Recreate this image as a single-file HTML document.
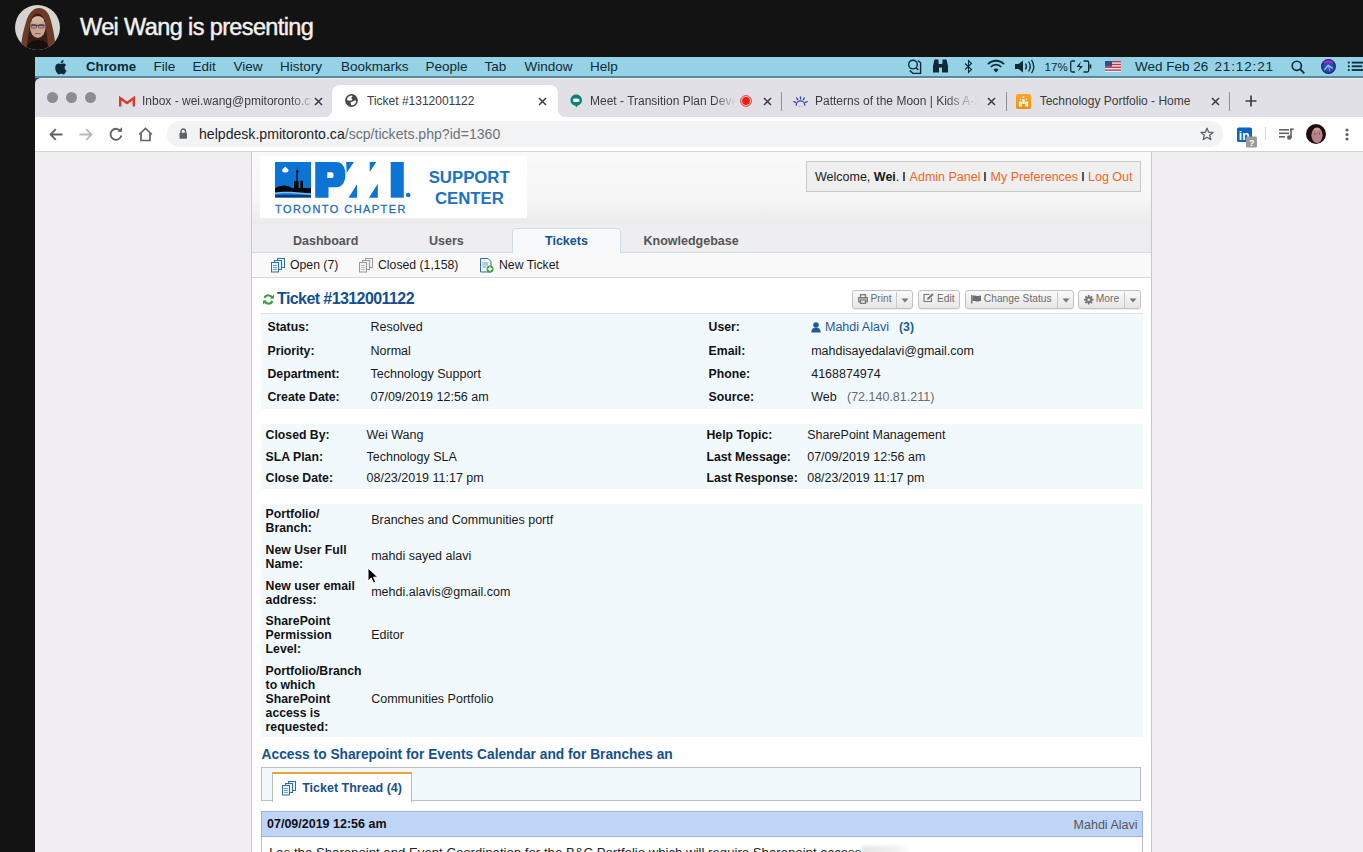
<!DOCTYPE html>
<html><head><meta charset="utf-8"><style>*{margin:0;padding:0;box-sizing:border-box}
html,body{width:1363px;height:852px;overflow:hidden;background:#131313;font-family:"Liberation Sans",sans-serif}
.a{position:absolute;white-space:nowrap}
svg.a{overflow:visible}
</style></head><body>
<svg class="a" style="left:15px;top:5px;" width="45" height="45" viewBox="0 0 45 45"><defs><clipPath id="av"><circle cx="22.5" cy="22.5" r="22.5"/></clipPath><filter id="bl" x="-10%" y="-10%" width="120%" height="120%"><feGaussianBlur stdDeviation="0.7"/></filter></defs>
<g clip-path="url(#av)"><rect width="45" height="45" fill="#d6d4d1"/>
<g filter="url(#bl)">
<path d="M6 45 C6 36 8 26 12 14 C15 6 20 3 24 3 C30 3 34 8 36 16 C39 27 40 36 41 45 Z" fill="#6a3b26"/>
<path d="M12 45 C12 38 13 30 14.5 22 C15.5 14 18 9 22 8.5 C27 8.5 30 13 31 22 C32 30 33 38 33 45 Z" fill="#3a1e14"/>
<ellipse cx="22.8" cy="22" rx="7.8" ry="11" fill="#c9a391"/>
<ellipse cx="22.8" cy="15" rx="6" ry="3.5" fill="#d4b3a2"/>
<path d="M16 20.5 H29.5" stroke="#52464d" stroke-width="1.3"/>
<rect x="16" y="19.5" width="5.5" height="3.5" rx="1" fill="none" stroke="#52464d" stroke-width="0.8"/>
<rect x="23.5" y="19.5" width="5.5" height="3.5" rx="1" fill="none" stroke="#52464d" stroke-width="0.8"/>
<path d="M20 28.5 H25.5" stroke="#8a5a50" stroke-width="1"/>
<path d="M10 45 C12 38 17 35 23 35 C29 35 33 38 35 45 Z" fill="#141111"/>
</g></g></svg>
<div class="a" style="left:80px;top:15.63px;font-size:23.5px;line-height:23.5px;color:#f1f1f1;letter-spacing:-0.62px;-webkit-text-stroke:0.45px #f1f1f1;">Wei Wang is presenting</div>
<div class="a" style="left:35px;top:57px;width:1328px;height:20px;background:#95d2e5"></div>
<div class="a" style="left:35px;top:76px;width:1328px;height:2px;background:#5b8994"></div>
<div class="a" style="left:35px;top:78px;width:7px;height:7px;background:#1d4f5d"></div>
<svg class="a" style="left:55px;top:60px;" width="12" height="14" viewBox="0 0 12 14"><path d="M9.6 7.5c0-1.7 1.4-2.5 1.5-2.6-.8-1.2-2.1-1.4-2.5-1.4-1.1-.1-2.1.6-2.6.6s-1.4-.6-2.3-.6C2.5 3.5 1.4 4.2.8 5.3-.5 7.5.5 10.8 1.7 12.6c.6.9 1.3 1.8 2.2 1.8.9 0 1.2-.6 2.3-.6s1.4.6 2.3.6c.9 0 1.5-.9 2.1-1.8.7-1 .9-1.9 1-2-.1 0-2-.8-2-3.1zM7.9 2.3c.5-.6.8-1.4.7-2.3-.7 0-1.6.5-2.1 1.1-.5.5-.9 1.4-.8 2.2.8.1 1.7-.4 2.2-1z" fill="#0d2a38"/></svg>
<div class="a" style="left:86px;top:59.74px;font-size:13.25px;line-height:13.25px;font-weight:bold;color:#0d2a38;">Chrome</div>
<div class="a" style="left:153.5px;top:59.52px;font-size:13.5px;line-height:13.5px;color:#0d2a38;">File</div>
<div class="a" style="left:192.5px;top:59.52px;font-size:13.5px;line-height:13.5px;color:#0d2a38;">Edit</div>
<div class="a" style="left:233.5px;top:59.52px;font-size:13.5px;line-height:13.5px;color:#0d2a38;">View</div>
<div class="a" style="left:280px;top:59.52px;font-size:13.5px;line-height:13.5px;color:#0d2a38;">History</div>
<div class="a" style="left:341px;top:59.52px;font-size:13.5px;line-height:13.5px;color:#0d2a38;">Bookmarks</div>
<div class="a" style="left:425.5px;top:59.52px;font-size:13.5px;line-height:13.5px;color:#0d2a38;">People</div>
<div class="a" style="left:484.5px;top:59.52px;font-size:13.5px;line-height:13.5px;color:#0d2a38;">Tab</div>
<div class="a" style="left:524.5px;top:59.52px;font-size:13.5px;line-height:13.5px;color:#0d2a38;">Window</div>
<div class="a" style="left:590px;top:59.52px;font-size:13.5px;line-height:13.5px;color:#0d2a38;">Help</div>
<svg class="a" style="left:907px;top:59px;" width="16" height="16" viewBox="0 0 16 16"><g fill="none" stroke="#0d2a38" stroke-width="1.4"><circle cx="6" cy="5.6" r="4.3"/><path d="M9.1 8.7 L11.4 11"/><path d="M10.8 1.5 L13.6 3.8 V14.4 H6 L2.8 11.6"/></g></svg>
<svg class="a" style="left:933px;top:59px;" width="15" height="14" viewBox="0 0 15 14"><g fill="#0d2a38"><path d="M1.5 0.5 H5.5 V4 L6 5 V13.5 H0 V7 Z"/><path d="M13.5 0.5 H9.5 V4 L9 5 V13.5 H15 V7 Z"/><rect x="5.5" y="5" width="4" height="3.5"/></g></svg>
<svg class="a" style="left:964px;top:59px;" width="9" height="15" viewBox="0 0 9 15"><path d="M1 4.5 L7.5 10.5 L4.5 13.5 V1.5 L7.5 4.5 L1 10.5" fill="none" stroke="#0d2a38" stroke-width="1.1"/></svg>
<svg class="a" style="left:987px;top:59px;" width="18" height="14" viewBox="0 0 18 14"><path d="M1 5.2 A11 11 0 0 1 17 5.2" fill="none" stroke="#0d2a38" stroke-width="1.8"/><path d="M3.8 8 A7 7 0 0 1 14.2 8" fill="none" stroke="#0d2a38" stroke-width="1.8"/><path d="M6.5 10.8 A3.2 3.2 0 0 1 11.5 10.8 L9 13.5 Z" fill="#0d2a38"/></svg>
<svg class="a" style="left:1014px;top:59px;" width="21" height="15" viewBox="0 0 21 15"><path d="M1 5 H4.5 L9 1.5 V13.5 L4.5 10 H1 Z" fill="#0d2a38"/><path d="M11.5 4.5 Q13.5 7.5 11.5 10.5" fill="none" stroke="#0d2a38" stroke-width="1.3"/><path d="M14.5 2.5 Q18 7.5 14.5 12.5" fill="none" stroke="#0d2a38" stroke-width="1.3"/><path d="M17.5 0.8 Q22 7.5 17.5 14.2" fill="none" stroke="#0d2a38" stroke-width="1.3"/></svg>
<div class="a" style="left:1044.5px;top:61.14px;font-size:11.6px;line-height:11.6px;color:#0d2a38;">17%</div>
<svg class="a" style="left:1070px;top:60px;" width="22" height="13" viewBox="0 0 22 13"><path d="M5 1 H2.2 Q0.7 1 0.7 2.5 V10.5 Q0.7 12 2.2 12 H5 M13.5 1 H17.2 Q18.7 1 18.7 2.5 V10.5 Q18.7 12 17.2 12 H13.5" fill="none" stroke="#0d2a38" stroke-width="1.3"/><rect x="19.5" y="4.5" width="1.8" height="4" fill="#0d2a38"/><path d="M11 1.5 L6.5 7 H10 L8 11.5 L13 6 H9.5 Z" fill="#0d2a38"/></svg>
<svg class="a" style="left:1105px;top:61px;" width="16" height="11" viewBox="0 0 16 11"><rect width="16" height="11" fill="#e8e8f0"/><rect y="0" width="16" height="1.4" fill="#c7394a"/><rect y="2.8" width="16" height="1.4" fill="#c7394a"/><rect y="5.6" width="16" height="1.4" fill="#c7394a"/><rect y="8.4" width="16" height="1.4" fill="#c7394a"/><rect width="7" height="5.6" fill="#3c4a8c"/></svg>
<div class="a" style="left:1135px;top:59.52px;font-size:13.5px;line-height:13.5px;color:#0d2a38;">Wed Feb 26</div>
<div class="a" style="left:1214.5px;top:59.52px;font-size:13.5px;line-height:13.5px;color:#0d2a38;letter-spacing:0.85px;">21:12:21</div>
<svg class="a" style="left:1291px;top:60px;" width="14" height="14" viewBox="0 0 14 14"><circle cx="5.8" cy="5.8" r="4.6" fill="none" stroke="#0d2a38" stroke-width="1.6"/><path d="M9.2 9.2 L13.3 13.3" stroke="#0d2a38" stroke-width="1.8"/></svg>
<svg class="a" style="left:1321px;top:58.8px;" width="15" height="15" viewBox="0 0 15 15"><defs><radialGradient id="siri" cx="50%" cy="50%" r="50%"><stop offset="0" stop-color="#3a5fd8"/><stop offset="0.75" stop-color="#2a3fa8"/><stop offset="1" stop-color="#101a50"/></radialGradient></defs><circle cx="7.5" cy="7.5" r="7.4" fill="url(#siri)"/><path d="M3 4 Q7.5 0.5 12 4" stroke="#c02cc8" stroke-width="2" fill="none" opacity="0.85"/><path d="M3.2 11 L7.2 6.3 L11.8 9.5" stroke="#6fe0f5" stroke-width="1.2" fill="none"/><path d="M7.2 6.3 L9 12.5" stroke="#c58ae8" stroke-width="0.9" fill="none"/></svg>
<svg class="a" style="left:1346.5px;top:61px;" width="17" height="12" viewBox="0 0 17 12"><g fill="#0d2a38"><circle cx="1.8" cy="1.6" r="1.1"/><circle cx="1.8" cy="5.3" r="1.1"/><circle cx="1.8" cy="9" r="1.1"/><rect x="4.7" y="0.7" width="13" height="1.8"/><rect x="4.7" y="4.4" width="10.5" height="1.8"/><rect x="4.7" y="8.1" width="13" height="1.8"/></g></svg>
<div class="a" style="left:35px;top:78px;width:1328px;height:39px;background:#e0e0e6;border-top:1px solid #e6eef4;border-top-left-radius:6px"></div>
<div class="a" style="left:47.099999999999994px;top:92px;width:11.4px;height:11.4px;background:#8d8d91;border-radius:50%"></div>
<div class="a" style="left:65.8px;top:92px;width:11.4px;height:11.4px;background:#8d8d91;border-radius:50%"></div>
<div class="a" style="left:84.6px;top:92px;width:11.4px;height:11.4px;background:#8d8d91;border-radius:50%"></div>
<svg class="a" style="left:119px;top:96px;" width="16" height="11" viewBox="0 0 16 11"><path d="M1.2 10.5 V2 L8 7 L14.8 2 V10.5" fill="none" stroke="#d93a2b" stroke-width="2.4" stroke-linejoin="miter"/></svg>
<div class="a" style="left:142px;top:94.80px;font-size:12px;line-height:12px;color:#3b3c40;width:174px;overflow:hidden;padding-bottom:4px;-webkit-mask-image:linear-gradient(90deg,#000 85%,transparent);">Inbox - wei.wang@pmitoronto.c</div>
<svg class="a" style="left:313.5px;top:96.5px;" width="9" height="9" viewBox="0 0 9 9"><path d="M1 1 L8 8 M8 1 L1 8" stroke="#3b3c40" stroke-width="1.5"/></svg>
<div class="a" style="left:331.5px;top:85px;width:226px;height:32px;background:#fff;border-radius:8px 8px 0 0"></div>
<div class="a" style="left:323.5px;top:109px;width:8px;height:8px;background:radial-gradient(circle at 0 0,#e0e0e6 8px,#fff 8.5px)"></div>
<div class="a" style="left:557.5px;top:109px;width:8px;height:8px;background:radial-gradient(circle at 100% 0,#e0e0e6 8px,#fff 8.5px)"></div>
<svg class="a" style="left:344.5px;top:94.3px;" width="13" height="13" viewBox="0 0 13 13"><circle cx="6.5" cy="6.5" r="6.4" fill="#48494c"/><path d="M2 6 C2 3.8 3.8 2 6.2 1.6 L7.6 2.2 C6.4 3 6 4 6.9 4.8 C7.6 5.4 7.2 6.4 6.2 6.6 C4.6 6.8 3.2 6.6 2 6 Z" fill="#fff"/><path d="M5.4 8.8 C6.4 7.8 7.6 7.9 8.6 7.1 C9.6 6.5 10.6 6.4 11.2 6.9 C11 9.4 9.2 11.2 7 11.3 L5.8 10.9 C6.4 10.2 6.1 9.3 5.4 8.8 Z" fill="#fff"/></svg>
<div class="a" style="left:367px;top:94.80px;font-size:12px;line-height:12px;color:#3b3c40;">Ticket #1312001122</div>
<svg class="a" style="left:538.0px;top:96.5px;" width="9" height="9" viewBox="0 0 9 9"><path d="M1 1 L8 8 M8 1 L1 8" stroke="#3b3c40" stroke-width="1.5"/></svg>
<svg class="a" style="left:569.5px;top:93.5px;" width="12.5" height="14" viewBox="0 0 12.5 14"><path d="M6.25 0.6 C9.5 0.6 12 3.1 12 6.2 C12 9 10 11.2 7.4 11.7 L6.2 13.6 L5.6 11.7 C2.7 11.3 0.5 9 0.5 6.2 C0.5 3.1 3 0.6 6.25 0.6 Z" fill="#0b8175"/><rect x="3.3" y="4.6" width="4.6" height="3.5" rx="0.5" fill="#f2fbfa"/><path d="M7.6 5.6 L9.3 4.5 V8.2 L7.6 7.1 Z" fill="#f2fbfa"/></svg>
<div class="a" style="left:590px;top:94.80px;font-size:12px;line-height:12px;color:#3b3c40;width:146px;overflow:hidden;padding-bottom:4px;-webkit-mask-image:linear-gradient(90deg,#000 85%,transparent);">Meet - Transition Plan Development</div>
<svg class="a" style="left:740px;top:95px;" width="12" height="12" viewBox="0 0 12 12"><circle cx="6" cy="6" r="5.4" fill="none" stroke="#f0281c" stroke-width="0.9"/><circle cx="6" cy="6" r="3.9" fill="#f41c0e"/></svg>
<svg class="a" style="left:762.5px;top:96.5px;" width="9" height="9" viewBox="0 0 9 9"><path d="M1 1 L8 8 M8 1 L1 8" stroke="#3b3c40" stroke-width="1.5"/></svg>
<div class="a" style="left:781px;top:92px;width:1.2px;height:19px;background:#8f9196"></div>
<svg class="a" style="left:792.5px;top:95.5px;" width="15" height="11" viewBox="0 0 15 11"><g stroke="#4246a8" stroke-width="1.3" fill="none" stroke-linecap="round"><path d="M3.2 9.2 A4.3 4.3 0 0 1 11.8 9.2"/><path d="M7.5 0.8 V3"/><path d="M3.6 1.9 L4.7 3.7"/><path d="M11.4 1.9 L10.3 3.7"/><path d="M0.8 5.6 L2.6 6.4"/><path d="M14.2 5.6 L12.4 6.4"/></g><circle cx="6.3" cy="10.4" r="0.5" fill="#8a8cc8"/><circle cx="8.7" cy="10.4" r="0.5" fill="#8a8cc8"/></svg>
<div class="a" style="left:815px;top:94.80px;font-size:12px;line-height:12px;color:#3b3c40;width:166px;overflow:hidden;padding-bottom:4px;-webkit-mask-image:linear-gradient(90deg,#000 78%,transparent 98%);">Patterns of the Moon | Kids A-Z</div>
<svg class="a" style="left:986.5px;top:96.5px;" width="9" height="9" viewBox="0 0 9 9"><path d="M1 1 L8 8 M8 1 L1 8" stroke="#3b3c40" stroke-width="1.5"/></svg>
<div class="a" style="left:1005.5px;top:92px;width:1.2px;height:19px;background:#8f9196"></div>
<svg class="a" style="left:1016px;top:93.5px;" width="15" height="15" viewBox="0 0 15 15"><defs><linearGradient id="yg" x1="0" y1="0" x2="0" y2="1"><stop offset="0" stop-color="#f9a825"/><stop offset="1" stop-color="#f78a0c"/></linearGradient></defs><rect width="15" height="15" rx="2" fill="url(#yg)"/><g fill="#fffbe8"><rect x="2.8" y="7.5" width="3" height="5"/><rect x="9.2" y="7.5" width="3" height="5"/><rect x="6.3" y="5" width="2.4" height="5"/><circle cx="7.5" cy="3" r="0.9"/><circle cx="4.4" cy="5.3" r="0.8"/><circle cx="10.6" cy="5.3" r="0.8"/></g></svg>
<div class="a" style="left:1039.7px;top:94.80px;font-size:12px;line-height:12px;color:#3b3c40;">Technology Portfolio - Home</div>
<svg class="a" style="left:1211.0px;top:96.5px;" width="9" height="9" viewBox="0 0 9 9"><path d="M1 1 L8 8 M8 1 L1 8" stroke="#3b3c40" stroke-width="1.5"/></svg>
<div class="a" style="left:1229px;top:92px;width:1.2px;height:19px;background:#8f9196"></div>
<svg class="a" style="left:1244.5px;top:95px;" width="12" height="12" viewBox="0 0 12 12"><path d="M6 0.5 V11.5 M0.5 6 H11.5" stroke="#3b3c40" stroke-width="1.7"/></svg>
<div class="a" style="left:35px;top:117px;width:1328px;height:34px;background:#fff"></div>
<div class="a" style="left:35px;top:151px;width:1328px;height:1px;background:#d3d3d6"></div>
<svg class="a" style="left:48.5px;top:127.5px;" width="14" height="13" viewBox="0 0 14 13"><path d="M13.5 6.5 H1.5 M6.8 1.2 L1.5 6.5 L6.8 11.8" fill="none" stroke="#5f6368" stroke-width="1.8"/></svg>
<svg class="a" style="left:78.5px;top:127.5px;" width="14" height="13" viewBox="0 0 14 13"><path d="M0.5 6.5 H12.5 M7.2 1.2 L12.5 6.5 L7.2 11.8" fill="none" stroke="#b8babd" stroke-width="1.8"/></svg>
<svg class="a" style="left:108.5px;top:127px;" width="14" height="14" viewBox="0 0 14 14"><path d="M11.6 4.2 A5.5 5.5 0 1 0 12.4 8.5" fill="none" stroke="#5f6368" stroke-width="1.8"/><path d="M8.3 4.8 H13 V0.2 Z" fill="#5f6368"/></svg>
<svg class="a" style="left:138px;top:126.5px;" width="15" height="14.5" viewBox="0 0 15 14.5"><path d="M1.2 7.5 L7.5 1.5 L13.8 7.5 M3 6 V13.5 H12 V6" fill="none" stroke="#5f6368" stroke-width="1.7" stroke-linejoin="miter"/></svg>
<div class="a" style="left:167px;top:121px;width:1056px;height:25.5px;background:#f1f3f4;border-radius:13px"></div>
<svg class="a" style="left:179px;top:128px;" width="8.5" height="11" viewBox="0 0 8.5 11"><path d="M2 5 V3.3 A2.25 2.25 0 0 1 6.5 3.3 V5" fill="none" stroke="#5f6368" stroke-width="1.4"/><rect x="0.5" y="4.8" width="7.5" height="6" rx="0.8" fill="#5f6368"/></svg>
<div class="a" style="left:199px;top:127.02px;font-size:14.1px;line-height:14.1px;color:#222;">helpdesk.pmitoronto.ca<span style="color:#6f7276">/scp/tickets.php?id=1360</span></div>
<svg class="a" style="left:1199.5px;top:127px;" width="14" height="14" viewBox="0 0 14 14"><path d="M7 1.2 L8.7 5.2 L13 5.5 L9.7 8.3 L10.8 12.6 L7 10.3 L3.2 12.6 L4.3 8.3 L1 5.5 L5.3 5.2 Z" fill="none" stroke="#5f6368" stroke-width="1.3" stroke-linejoin="round"/></svg>
<svg class="a" style="left:1237px;top:126.5px;" width="21" height="21" viewBox="0 0 21 21"><rect x="0" y="0.5" width="15" height="14.5" rx="1.5" fill="#0a66c2"/><text x="1.8" y="12.6" font-family="Liberation Sans" font-weight="bold" font-size="12" fill="#fff">in</text><rect x="9" y="9.5" width="11" height="11" rx="1.5" fill="#9a9a9a"/><text x="12" y="18.5" font-family="Liberation Sans" font-weight="bold" font-size="9" fill="#fff">?</text></svg>
<div class="a" style="left:1265px;top:127px;width:1px;height:13px;background:#d6d6d8"></div>
<svg class="a" style="left:1279px;top:128px;" width="15" height="12" viewBox="0 0 15 12"><g fill="#5f6368"><rect x="0" y="1" width="10" height="1.6"/><rect x="0" y="4.5" width="10" height="1.6"/><rect x="0" y="8" width="6" height="1.6"/><circle cx="10.3" cy="9.5" r="2.3"/><rect x="11.2" y="0.5" width="1.6" height="9"/><rect x="11.2" y="0.5" width="3.5" height="1.6"/></g></svg>
<svg class="a" style="left:1306px;top:123.8px;" width="20" height="20" viewBox="0 0 20 20"><defs><clipPath id="av2"><circle cx="10" cy="10" r="10"/></clipPath></defs><g clip-path="url(#av2)"><rect width="20" height="20" fill="#1e0d0e"/><ellipse cx="11" cy="11.2" rx="5.6" ry="7.8" fill="#b5818a"/><ellipse cx="11" cy="5.2" rx="3" ry="1.5" fill="#cf9a98"/><circle cx="8.8" cy="10" r="0.7" fill="#6a3a44"/><circle cx="13.5" cy="9.5" r="0.7" fill="#6a3a44"/></g></svg>
<svg class="a" style="left:1345px;top:128px;" width="4" height="13" viewBox="0 0 4 13"><g fill="#5f6368"><circle cx="2" cy="2" r="1.6"/><circle cx="2" cy="6.5" r="1.6"/><circle cx="2" cy="11" r="1.6"/></g></svg>
<div class="a" style="left:35px;top:152px;width:1328px;height:700px;background:#f0eef1"></div>
<div class="a" style="left:251px;top:152px;width:901px;height:700px;background:#fff;border-left:1px solid #c9c9cb;border-right:1px solid #c9c9cb"></div>
<div class="a" style="left:252px;top:152px;width:899px;height:72px;background:linear-gradient(#f9f9f9 0,#f7f7f7 62%,#ebebeb 100%)"></div>
<div class="a" style="left:260px;top:156px;width:267px;height:62px;background:#fff"></div>
<svg class="a" style="left:275px;top:162px;" width="36" height="35.5" viewBox="0 0 36 35.5"><rect width="36" height="35.5" fill="#0b74d4"/>
<path d="M0 26.5 C3 24 7 23.3 10 23.5 C13 23.8 15.5 25 17 26 H19 V19 H21.4 V12 L21.8 9 L22.1 3.6 L22.4 9 L22.8 12 V19 H23.6 V26 H25.3 V18.7 H28 V26 H36 V31 H0 Z" fill="#050a12"/>
<circle cx="22.3" cy="9.5" r="1.3" fill="#050a12"/>
<path d="M0 30.5 C8 29 18 29.5 36 31.5 V33 C18 31 8 30.7 0 32 Z" fill="#7cc3f2"/>
<path d="M0 33 H36 V35.5 H0 Z" fill="#0a3a78"/>
<path d="M10.3 4.6 C11 5.5 11.3 6 12 6 C12.5 6.3 12.2 7 12.8 7.2 C13.8 7.5 13.8 8.5 13.2 9.3 C12.5 10.3 11.3 10.6 10.3 10.6 C9.3 10.6 8 10.3 7.4 9.3 C6.8 8.5 6.8 7.5 7.8 7.2 C8.4 7 8.1 6.3 8.6 6 C9.3 6 9.6 5.5 10.3 4.6 Z" fill="#fff"/>
</svg>
<svg class="a" style="left:315px;top:162px;" width="95" height="36" viewBox="0 0 95 36"><g fill="#0b74d4">
<path d="M0.2 0 H21 C27 0 30.4 4.5 30.4 12.5 C30.4 20.5 27 25.3 21 25.3 H13.5 V35.7 H0.2 Z M12.3 10.2 V16 H17 C18.3 16 18.5 14.5 18.5 13 C18.5 11.3 18 10.2 16.7 10.2 Z" fill-rule="evenodd"/>
<path d="M31.2 0 H38.9 L31.6 11 Z"/>
<path d="M33.5 35.7 H42 V22.2 Z"/>
<path d="M54.7 0 H61.3 L54.7 9.9 Z"/>
<path d="M53.9 35.7 H62.8 V21.8 Z"/>
<path d="M75.7 0 H88.8 V35.7 H75.7 Z"/>
<circle cx="93.2" cy="33" r="2.3"/>
</g></svg>
<div class="a" style="left:275px;top:203.85px;font-size:11px;line-height:11px;color:#1c6fb8;letter-spacing:1.45px;-webkit-text-stroke:0.3px #1c6fb8;">TORONTO CHAPTER</div>
<div class="a" style="left:428.7px;top:169.76px;font-size:16.75px;line-height:16.75px;font-weight:bold;color:#1a72c4;">SUPPORT</div>
<div class="a" style="left:435px;top:190.76px;font-size:16.75px;line-height:16.75px;font-weight:bold;color:#1a72c4;">CENTER</div>
<div class="a" style="left:806px;top:161px;width:335px;height:31px;background:#efefef;border:1px solid #c8c8c8"></div>
<div class="a" style="left:815px;top:170.97px;font-size:12.5px;line-height:12.5px;color:#1a1a1a;">Welcome, <b>Wei</b>.</div>
<div class="a" style="left:903.3px;top:172.2px;width:1.6px;height:8.8px;background:#555"></div>
<div class="a" style="left:909.6px;top:170.97px;font-size:12.5px;line-height:12.5px;color:#ef671d;">Admin Panel</div>
<div class="a" style="left:984.3px;top:172.2px;width:1.6px;height:8.8px;background:#555"></div>
<div class="a" style="left:990.5px;top:170.97px;font-size:12.5px;line-height:12.5px;color:#ef671d;">My Preferences</div>
<div class="a" style="left:1082.3px;top:172.2px;width:1.6px;height:8.8px;background:#555"></div>
<div class="a" style="left:1088px;top:170.97px;font-size:12.5px;line-height:12.5px;color:#ef671d;">Log Out</div>
<div class="a" style="left:252px;top:224px;width:899px;height:29px;background:#eeedef;border-bottom:1px solid #cfdce8"></div>
<div class="a" style="left:512px;top:228px;width:109px;height:25px;background:#f7f9fb;border:1px solid #cfdbe6;border-bottom:none;border-radius:4px 4px 0 0"></div>
<div class="a" style="left:293px;top:234.82px;font-size:12.5px;line-height:12.5px;font-weight:bold;color:#555;">Dashboard</div>
<div class="a" style="left:429px;top:234.82px;font-size:12.5px;line-height:12.5px;font-weight:bold;color:#555;">Users</div>
<div class="a" style="left:545px;top:234.82px;font-size:12.5px;line-height:12.5px;font-weight:bold;color:#15518f;">Tickets</div>
<div class="a" style="left:643.5px;top:234.82px;font-size:12.5px;line-height:12.5px;font-weight:bold;color:#555;">Knowledgebase</div>
<div class="a" style="left:252px;top:253px;width:899px;height:25px;background:#f9f9f9;border-bottom:1px solid #d8d8d8"></div>
<svg class="a" style="left:270px;top:258px;" width="16" height="15" viewBox="0 0 16 15"><g stroke="#2f6fa6" stroke-width="1" fill="#e9f1f8"><rect x="7.5" y="0.5" width="7" height="9"/><rect x="4.5" y="2.5" width="7" height="9"/><rect x="1.5" y="4.5" width="7" height="9.5"/></g><g stroke="#2f6fa6" stroke-width="0.6"><path d="M3 7.5 H7 M3 9.5 H7 M3 11.5 H7"/></g></svg>
<div class="a" style="left:290px;top:259.14px;font-size:12.25px;line-height:12.25px;color:#1a1a1a;">Open (7)</div>
<svg class="a" style="left:358px;top:258px;" width="16" height="15" viewBox="0 0 16 15"><g stroke="#9a9a9a" stroke-width="1" fill="#f2f2f2"><rect x="7.5" y="0.5" width="7" height="9"/><rect x="4.5" y="2.5" width="7" height="9"/><rect x="1.5" y="4.5" width="7" height="9.5"/></g><g stroke="#9a9a9a" stroke-width="0.6"><path d="M3 7.5 H7 M3 9.5 H7 M3 11.5 H7"/></g></svg>
<div class="a" style="left:378px;top:259.14px;font-size:12.25px;line-height:12.25px;color:#1a1a1a;">Closed (1,158)</div>
<svg class="a" style="left:480px;top:257.5px;" width="14" height="15" viewBox="0 0 14 15"><path d="M0.5 0.5 H8 L11 3.5 V14 H0.5 Z" fill="#eef3f8" stroke="#2f6fa6" stroke-width="1"/><path d="M2.5 5 H8 M2.5 7 H8 M2.5 9 H6" stroke="#2f6fa6" stroke-width="0.6"/><circle cx="10" cy="11" r="3.5" fill="#3aa03a"/><path d="M10 8.8 V13.2 M7.8 11 H12.2" stroke="#fff" stroke-width="1.3"/></svg>
<div class="a" style="left:499px;top:259.14px;font-size:12.25px;line-height:12.25px;color:#1a1a1a;">New Ticket</div>
<svg class="a" style="left:262.5px;top:293.5px;" width="11" height="11" viewBox="0 0 11 11"><g fill="none" stroke="#3a9d3a" stroke-width="2"><path d="M9.5 4.2 A4.3 4.3 0 0 0 1.5 4"/><path d="M1.5 6.8 A4.3 4.3 0 0 0 9.5 7"/></g><path d="M7 4.5 H11 V0.5 Z" fill="#3a9d3a"/><path d="M4 6.5 H0 V10.5 Z" fill="#3a9d3a"/></svg>
<div class="a" style="left:277px;top:291.40px;font-size:16px;line-height:16px;font-weight:bold;color:#13508f;letter-spacing:-0.58px;">Ticket #1312001122</div>
<div class="a" style="left:852px;top:290px;width:61px;height:18.5px;background:linear-gradient(#fafafa,#e6e6e6);border:1px solid #c2c2c2;border-radius:3px;box-shadow:0 1px 0 rgba(0,0,0,0.06)"></div>
<div class="a" style="left:896.4px;top:291.5px;width:1px;height:16px;background:#c8c8c8"></div>
<svg class="a" style="left:857.5px;top:293.5px;" width="10" height="10" viewBox="0 0 10 10"><g fill="none" stroke="#777" stroke-width="1.3"><rect x="2.5" y="0.7" width="5" height="3"/><rect x="0.7" y="3.7" width="8.6" height="4"/><rect x="2.5" y="6" width="5" height="3.3" fill="#f4f4f4"/></g></svg>
<div class="a" style="left:870.5px;top:294.49px;font-size:10.25px;line-height:10.25px;color:#6e6e6e;">Print</div>
<svg class="a" style="left:900.5px;top:297.5px;" width="8" height="5" viewBox="0 0 8 5"><path d="M0.5 0.5 H7.5 L4 4.5 Z" fill="#777"/></svg>
<div class="a" style="left:918.3px;top:290px;width:42px;height:18.5px;background:linear-gradient(#fafafa,#e6e6e6);border:1px solid #c2c2c2;border-radius:3px;box-shadow:0 1px 0 rgba(0,0,0,0.06)"></div>
<svg class="a" style="left:923px;top:293px;" width="11" height="10" viewBox="0 0 11 10"><path d="M6.5 1.5 H1 V8.5 H8.5 V5" fill="none" stroke="#777" stroke-width="1.1"/><path d="M4 6.8 L4.4 5 L9.3 0.3 L10.7 1.7 L5.8 6.4 Z" fill="#777"/></svg>
<div class="a" style="left:937px;top:294.49px;font-size:10.25px;line-height:10.25px;color:#6e6e6e;">Edit</div>
<div class="a" style="left:965px;top:290px;width:109px;height:18.5px;background:linear-gradient(#fafafa,#e6e6e6);border:1px solid #c2c2c2;border-radius:3px;box-shadow:0 1px 0 rgba(0,0,0,0.06)"></div>
<div class="a" style="left:1057.4px;top:291.5px;width:1px;height:16px;background:#c8c8c8"></div>
<svg class="a" style="left:971px;top:294.5px;" width="10.5" height="9" viewBox="0 0 10.5 9"><path d="M0.8 0 V8.5" stroke="#6e6e6e" stroke-width="1.3"/><path d="M1.5 0.8 C4 -0.2 5.5 1.8 10 0.6 V6 C5.5 7.2 4 5.2 1.5 6.2 Z" fill="#6e6e6e"/></svg>
<div class="a" style="left:983.8px;top:294.49px;font-size:10.25px;line-height:10.25px;color:#6e6e6e;">Change Status</div>
<svg class="a" style="left:1061.5px;top:297.5px;" width="8" height="5" viewBox="0 0 8 5"><path d="M0.5 0.5 H7.5 L4 4.5 Z" fill="#777"/></svg>
<div class="a" style="left:1078px;top:290px;width:63px;height:18.5px;background:linear-gradient(#fafafa,#e6e6e6);border:1px solid #c2c2c2;border-radius:3px;box-shadow:0 1px 0 rgba(0,0,0,0.06)"></div>
<div class="a" style="left:1124.4px;top:291.5px;width:1px;height:16px;background:#c8c8c8"></div>
<svg class="a" style="left:1084px;top:294.5px;" width="9.5" height="9.5" viewBox="0 0 9.5 9.5"><g fill="#777"><circle cx="4.75" cy="4.75" r="3.2"/><g stroke="#777" stroke-width="1.8"><path d="M4.75 0 V9.5 M0 4.75 H9.5 M1.4 1.4 L8.1 8.1 M8.1 1.4 L1.4 8.1"/></g></g><circle cx="4.75" cy="4.75" r="1.3" fill="#ececec"/></svg>
<div class="a" style="left:1095.8px;top:294.49px;font-size:10.25px;line-height:10.25px;color:#6e6e6e;">More</div>
<svg class="a" style="left:1128.5px;top:297.5px;" width="8" height="5" viewBox="0 0 8 5"><path d="M0.5 0.5 H7.5 L4 4.5 Z" fill="#777"/></svg>
<div class="a" style="left:261px;top:313px;width:882px;height:1px;background:#dedede"></div>
<div class="a" style="left:261px;top:314px;width:882px;height:95px;background:#f2f9fd"></div>
<div class="a" style="left:267.5px;top:321.14px;font-size:12.25px;line-height:12.25px;font-weight:bold;color:#111;">Status:</div>
<div class="a" style="left:370.5px;top:320.93px;font-size:12.5px;line-height:12.5px;color:#1a1a1a;">Resolved</div>
<div class="a" style="left:267.5px;top:344.94px;font-size:12.25px;line-height:12.25px;font-weight:bold;color:#111;">Priority:</div>
<div class="a" style="left:370.5px;top:344.73px;font-size:12.5px;line-height:12.5px;color:#1a1a1a;">Normal</div>
<div class="a" style="left:267.5px;top:368.24px;font-size:12.25px;line-height:12.25px;font-weight:bold;color:#111;">Department:</div>
<div class="a" style="left:370.5px;top:368.02px;font-size:12.5px;line-height:12.5px;color:#1a1a1a;">Technology Support</div>
<div class="a" style="left:267.5px;top:391.34px;font-size:12.25px;line-height:12.25px;font-weight:bold;color:#111;">Create Date:</div>
<div class="a" style="left:370.5px;top:391.12px;font-size:12.5px;line-height:12.5px;color:#1a1a1a;">07/09/2019 12:56 am</div>
<div class="a" style="left:708.6px;top:321.14px;font-size:12.25px;line-height:12.25px;font-weight:bold;color:#111;">User:</div>
<div class="a" style="left:708.6px;top:344.94px;font-size:12.25px;line-height:12.25px;font-weight:bold;color:#111;">Email:</div>
<div class="a" style="left:708.6px;top:368.24px;font-size:12.25px;line-height:12.25px;font-weight:bold;color:#111;">Phone:</div>
<div class="a" style="left:708.6px;top:391.34px;font-size:12.25px;line-height:12.25px;font-weight:bold;color:#111;">Source:</div>
<svg class="a" style="left:811px;top:321.5px;" width="10" height="11" viewBox="0 0 10 11"><circle cx="5" cy="3" r="2.8" fill="#1d5c96"/><path d="M0.3 10.5 C0.3 7 2 5.8 5 5.8 C8 5.8 9.7 7 9.7 10.5 Z" fill="#1d5c96"/></svg>
<div class="a" style="left:825px;top:320.93px;font-size:12.5px;line-height:12.5px;color:#1d5c96;">Mahdi Alavi</div>
<div class="a" style="left:899px;top:321.14px;font-size:12.25px;line-height:12.25px;font-weight:bold;color:#1d5c96;">(3)</div>
<div class="a" style="left:811.2px;top:344.73px;font-size:12.5px;line-height:12.5px;color:#1a1a1a;">mahdisayedalavi@gmail.com</div>
<div class="a" style="left:811.2px;top:368.02px;font-size:12.5px;line-height:12.5px;color:#1a1a1a;">4168874974</div>
<div class="a" style="left:811.2px;top:391.12px;font-size:12.5px;line-height:12.5px;color:#1a1a1a;">Web</div>
<div class="a" style="left:847px;top:391.12px;font-size:12.5px;line-height:12.5px;color:#6a6a6a;">(72.140.81.211)</div>
<div class="a" style="left:261px;top:424px;width:882px;height:65px;background:#f2f9fd"></div>
<div class="a" style="left:265.6px;top:429.24px;font-size:12.25px;line-height:12.25px;font-weight:bold;color:#111;">Closed By:</div>
<div class="a" style="left:366.5px;top:429.02px;font-size:12.5px;line-height:12.5px;color:#1a1a1a;">Wei Wang</div>
<div class="a" style="left:265.6px;top:450.84px;font-size:12.25px;line-height:12.25px;font-weight:bold;color:#111;">SLA Plan:</div>
<div class="a" style="left:366.5px;top:450.62px;font-size:12.5px;line-height:12.5px;color:#1a1a1a;">Technology SLA</div>
<div class="a" style="left:265.6px;top:471.94px;font-size:12.25px;line-height:12.25px;font-weight:bold;color:#111;">Close Date:</div>
<div class="a" style="left:366.5px;top:471.73px;font-size:12.5px;line-height:12.5px;color:#1a1a1a;">08/23/2019 11:17 pm</div>
<div class="a" style="left:706.5px;top:429.24px;font-size:12.25px;line-height:12.25px;font-weight:bold;color:#111;">Help Topic:</div>
<div class="a" style="left:807.2px;top:429.02px;font-size:12.5px;line-height:12.5px;color:#1a1a1a;">SharePoint Management</div>
<div class="a" style="left:706.5px;top:450.84px;font-size:12.25px;line-height:12.25px;font-weight:bold;color:#111;">Last Message:</div>
<div class="a" style="left:807.2px;top:450.62px;font-size:12.5px;line-height:12.5px;color:#1a1a1a;">07/09/2019 12:56 am</div>
<div class="a" style="left:706.5px;top:471.94px;font-size:12.25px;line-height:12.25px;font-weight:bold;color:#111;">Last Response:</div>
<div class="a" style="left:807.2px;top:471.73px;font-size:12.5px;line-height:12.5px;color:#1a1a1a;">08/23/2019 11:17 pm</div>
<div class="a" style="left:261px;top:503.5px;width:882px;height:233.5px;background:#f2f9fd"></div>
<div class="a" style="left:265.6px;top:508.44px;font-size:12.25px;line-height:12.25px;font-weight:bold;color:#111;">Portfolio/</div>
<div class="a" style="left:265.6px;top:522.44px;font-size:12.25px;line-height:12.25px;font-weight:bold;color:#111;">Branch:</div>
<div class="a" style="left:371.2px;top:514.42px;font-size:12.5px;line-height:12.5px;color:#1a1a1a;">Branches and Communities portf</div>
<div class="a" style="left:265.6px;top:543.64px;font-size:12.25px;line-height:12.25px;font-weight:bold;color:#111;">New User Full</div>
<div class="a" style="left:265.6px;top:557.64px;font-size:12.25px;line-height:12.25px;font-weight:bold;color:#111;">Name:</div>
<div class="a" style="left:371.2px;top:550.12px;font-size:12.5px;line-height:12.5px;color:#1a1a1a;">mahdi sayed alavi</div>
<div class="a" style="left:265.6px;top:579.94px;font-size:12.25px;line-height:12.25px;font-weight:bold;color:#111;">New user email</div>
<div class="a" style="left:265.6px;top:593.94px;font-size:12.25px;line-height:12.25px;font-weight:bold;color:#111;">address:</div>
<div class="a" style="left:371.2px;top:585.92px;font-size:12.5px;line-height:12.5px;color:#1a1a1a;">mehdi.alavis@gmail.com</div>
<div class="a" style="left:265.6px;top:615.14px;font-size:12.25px;line-height:12.25px;font-weight:bold;color:#111;">SharePoint</div>
<div class="a" style="left:265.6px;top:629.14px;font-size:12.25px;line-height:12.25px;font-weight:bold;color:#111;">Permission</div>
<div class="a" style="left:265.6px;top:643.14px;font-size:12.25px;line-height:12.25px;font-weight:bold;color:#111;">Level:</div>
<div class="a" style="left:371.2px;top:628.83px;font-size:12.5px;line-height:12.5px;color:#1a1a1a;">Editor</div>
<div class="a" style="left:265.6px;top:665.34px;font-size:12.25px;line-height:12.25px;font-weight:bold;color:#111;">Portfolio/Branch</div>
<div class="a" style="left:265.6px;top:679.34px;font-size:12.25px;line-height:12.25px;font-weight:bold;color:#111;">to which</div>
<div class="a" style="left:265.6px;top:693.34px;font-size:12.25px;line-height:12.25px;font-weight:bold;color:#111;">SharePoint</div>
<div class="a" style="left:265.6px;top:707.34px;font-size:12.25px;line-height:12.25px;font-weight:bold;color:#111;">access is</div>
<div class="a" style="left:265.6px;top:721.34px;font-size:12.25px;line-height:12.25px;font-weight:bold;color:#111;">requested:</div>
<div class="a" style="left:371.2px;top:693.12px;font-size:12.5px;line-height:12.5px;color:#1a1a1a;">Communities Portfolio</div>
<div class="a" style="left:261.6px;top:747.86px;font-size:13.75px;line-height:13.75px;font-weight:bold;color:#15518f;">Access to Sharepoint for Events Calendar and for Branches an</div>
<div class="a" style="left:261px;top:767px;width:880px;height:34px;background:#f2f9fd;border:1px solid #bdbdbd"></div>
<div class="a" style="left:271.5px;top:772px;width:140px;height:29.5px;background:#fff;border-left:1px solid #bdbdbd;border-right:1px solid #bdbdbd;border-top:2px solid #eba43a"></div>
<svg class="a" style="left:281px;top:780.5px;" width="16" height="15" viewBox="0 0 16 15"><g stroke="#2f6fa6" stroke-width="1" fill="#e9f1f8"><rect x="7.5" y="0.5" width="7" height="9"/><rect x="4.5" y="2.5" width="7" height="9"/><rect x="1.5" y="4.5" width="7" height="9.5"/></g><g stroke="#2f6fa6" stroke-width="0.6"><path d="M3 7.5 H7 M3 9.5 H7 M3 11.5 H7"/></g></svg>
<div class="a" style="left:302.2px;top:781.73px;font-size:12.5px;line-height:12.5px;font-weight:bold;color:#15518f;">Ticket Thread (4)</div>
<div class="a" style="left:261px;top:811px;width:882px;height:25.5px;background:#bfd5f7;border:1px solid #9fb3cc"></div>
<div class="a" style="left:267px;top:818.42px;font-size:12.5px;line-height:12.5px;font-weight:bold;color:#111;">07/09/2019 12:56 am</div>
<div class="a" style="left:1073.6px;top:818.73px;font-size:12.5px;line-height:12.5px;color:#555;">Mahdi Alavi</div>
<div class="a" style="left:261px;top:836.5px;width:882px;height:20px;background:#fff;border-left:1px solid #bdbdbd;border-right:1px solid #bdbdbd"></div>
<div class="a" style="left:269px;top:845.53px;font-size:13.2px;line-height:13.2px;color:#222;">I as the Sharepoint and Event Coordination for the B&amp;C Portfolio which will require Sharepoint access</div>
<div class="a" style="left:862px;top:846px;width:48px;height:10px;background:linear-gradient(90deg,rgba(0,0,0,0.10),rgba(0,0,0,0.06) 70%,rgba(0,0,0,0));filter:blur(1.5px)"></div>
<svg class="a" style="left:367px;top:567px;" width="12" height="17" viewBox="0 0 12 17"><path d="M1 1 V14 L4.2 11 L6.5 16 L8.7 15 L6.5 10.2 H10.8 Z" fill="#000" stroke="#fff" stroke-width="1"/></svg>
</body></html>
